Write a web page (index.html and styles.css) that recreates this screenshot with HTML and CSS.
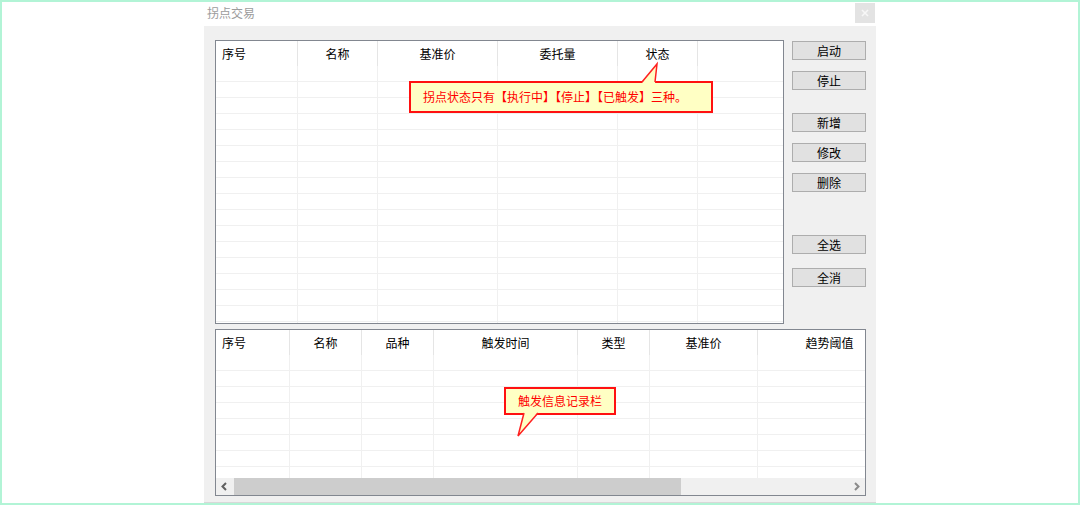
FILE: index.html
```html
<!DOCTYPE html>
<html lang="zh-CN">
<head>
  <title>拐点交易</title>
  <meta charset="UTF-8">
  <link rel="stylesheet" href="styles.css">
</head>
<body>
<div class="frame">
  <div class="window">
    <div class="titlebar">
      <span class="title">拐点交易</span>
      <span class="close">
        <svg width="20" height="20" viewBox="0 0 20 20"><path d="M7 7 L13 13 M13 7 L7 13" stroke="#f7f7f7" stroke-width="1.6"/></svg>
      </span>
    </div>

    <div class="panel">
      <div class="top">
        <div class="list list-points">
          <div class="list-head">
            <div class="th th-first">序号</div>
            <div class="th">名称</div>
            <div class="th">基准价</div>
            <div class="th">委托量</div>
            <div class="th">状态</div>
            <div class="th th-fill"></div>
          </div>
          <div class="list-body">
            <div class="col"></div>
            <div class="col"></div>
            <div class="col"></div>
            <div class="col"></div>
            <div class="col"></div>
            <div class="col col-fill"></div>
          </div>
        </div>

        <div class="buttons">
          <button class="btn">启动</button>
          <button class="btn gap-s">停止</button>
          <button class="btn gap-m">新增</button>
          <button class="btn gap-s">修改</button>
          <button class="btn gap-s">删除</button>
          <button class="btn gap-l">全选</button>
          <button class="btn gap-x">全消</button>
        </div>
      </div>

      <div class="list list-log">
        <div class="log-view">
          <div class="list-head">
            <div class="th th-first">序号</div>
            <div class="th">名称</div>
            <div class="th">品种</div>
            <div class="th">触发时间</div>
            <div class="th">类型</div>
            <div class="th">基准价</div>
            <div class="th">趋势阈值</div>
          </div>
          <div class="list-body">
            <div class="col"></div>
            <div class="col"></div>
            <div class="col"></div>
            <div class="col"></div>
            <div class="col"></div>
            <div class="col"></div>
            <div class="col"></div>
          </div>
        </div>
        <div class="hscroll">
          <span class="arrow">
            <svg width="17" height="17" viewBox="0 0 17 17"><polyline points="10,5 6.5,8.5 10,12" fill="none" stroke="#606060" stroke-width="2"/></svg>
          </span>
          <span class="track"><span class="thumb"></span></span>
          <span class="arrow">
            <svg width="17" height="17" viewBox="0 0 17 17"><polyline points="7,5 10.5,8.5 7,12" fill="none" stroke="#8a8a8a" stroke-width="2"/></svg>
          </span>
        </div>
      </div>

      <div class="callout callout-state">
        拐点状态只有【执行中】【停止】【已触发】三种。
        <svg class="tail" width="1" height="1">
          <polygon points="233,2 248,-17 246,2" fill="#ffffc4"/>
          <polyline points="233,1 248,-17 246,1" fill="none" stroke="#ff2020" stroke-width="1.5"/>
        </svg>
      </div>

      <div class="callout callout-log">
        触发信息记录栏
        <svg class="tail" width="1" height="1">
          <polygon points="20,25 14,49 34,25" fill="#ffffc4"/>
          <polyline points="20,26 14,49 34,26" fill="none" stroke="#ff2020" stroke-width="1.5"/>
        </svg>
      </div>
    </div>
  </div>
</div>
</body>
</html>
```

FILE: styles.css
```css
body {
  margin: 0;
  font-family: "Noto Sans CJK SC", "Noto Sans", sans-serif;
  font-size: 12px;
}

.frame {
  width: 1080px;
  height: 505px;
  box-sizing: border-box;
  border: 2px solid #b2f4d6;
  background: #fff;
}

.window {
  width: 672px;
  height: 100%;
  margin-left: 202px;
  display: flex;
  flex-direction: column;
}

.titlebar {
  height: 24px;
  display: flex;
  justify-content: space-between;
  align-items: flex-start;
}

.title {
  padding: 3px 0 0 3px;
  line-height: 16px;
  color: #9c9c9c;
}

.close {
  margin: 1px 1px 0 0;
  width: 20px;
  height: 20px;
  background: #e3e3e3;
}

.close svg {
  display: block;
}

.panel {
  position: relative;
  flex: 1;
  background: #f0f0f0;
  border-bottom: 1px solid #d8d8d8;
  padding: 14px 0 0 11px;
}

.top {
  display: flex;
  gap: 8px;
}

/* list views */
.list {
  box-sizing: border-box;
  border: 1px solid #828790;
  background: #fff;
  overflow: hidden;
}

.list-points {
  width: 569px;
  height: 284px;
  --cols: 82px 80px 120px 120px 80px 1fr;
}

.list-log {
  width: 651px;
  height: 167px;
  margin-top: 5px;
  display: flex;
  flex-direction: column;
  --cols: 74px 72px 72px 144px 72px 108px 144px;
}

.list-head,
.list-body {
  display: grid;
  grid-template-columns: var(--cols);
}

.th {
  height: 25px;
  line-height: 25px;
  text-align: center;
  color: #000;
  box-sizing: border-box;
  border-right: 1px solid #e5e5e5;
  white-space: nowrap;
}

.th-first {
  text-align: left;
  padding-left: 6px;
}

.th-fill {
  border-right: none;
}

.list-body {
  height: 100%;
  background: repeating-linear-gradient(to bottom, transparent 0 15px, #f0f0f0 15px 16px);
}

.col {
  box-sizing: border-box;
  border-right: 1px solid #f0f0f0;
}

.col-fill {
  border-right: none;
}

.log-view {
  flex: 1;
  overflow: hidden;
}

.hscroll {
  height: 17px;
  display: flex;
  background: #f0f0f0;
}

.arrow {
  width: 17px;
  height: 17px;
}

.arrow svg {
  display: block;
}

.track {
  flex: 1;
  padding-left: 1px;
}

.thumb {
  display: block;
  width: 447px;
  height: 100%;
  background: #cdcdcd;
}

/* right-hand buttons */
.buttons {
  display: flex;
  flex-direction: column;
  padding-top: 1px;
}

.btn {
  width: 74px;
  height: 19px;
  padding: 0;
  box-sizing: border-box;
  border: 1px solid #adadad;
  background: #e1e1e1;
  font-family: inherit;
  font-size: 12px;
  line-height: 17px;
  color: #000;
}

.gap-s { margin-top: 11px; }
.gap-m { margin-top: 23px; }
.gap-l { margin-top: 43px; }
.gap-x { margin-top: 14px; }

/* callouts */
.callout {
  position: absolute;
  box-sizing: border-box;
  border: 2px solid #ff1010;
  background: #ffffc4;
  color: #ff0000;
  white-space: nowrap;
}

.callout .tail {
  position: absolute;
  left: -2px;
  top: -2px;
  overflow: visible;
}

.callout-state {
  left: 205px;
  top: 55px;
  width: 304px;
  height: 32px;
  padding-left: 12px;
  line-height: 28px;
}

.callout-log {
  left: 300px;
  top: 361px;
  width: 112px;
  height: 28px;
  padding-left: 12px;
  line-height: 24px;
}
```
